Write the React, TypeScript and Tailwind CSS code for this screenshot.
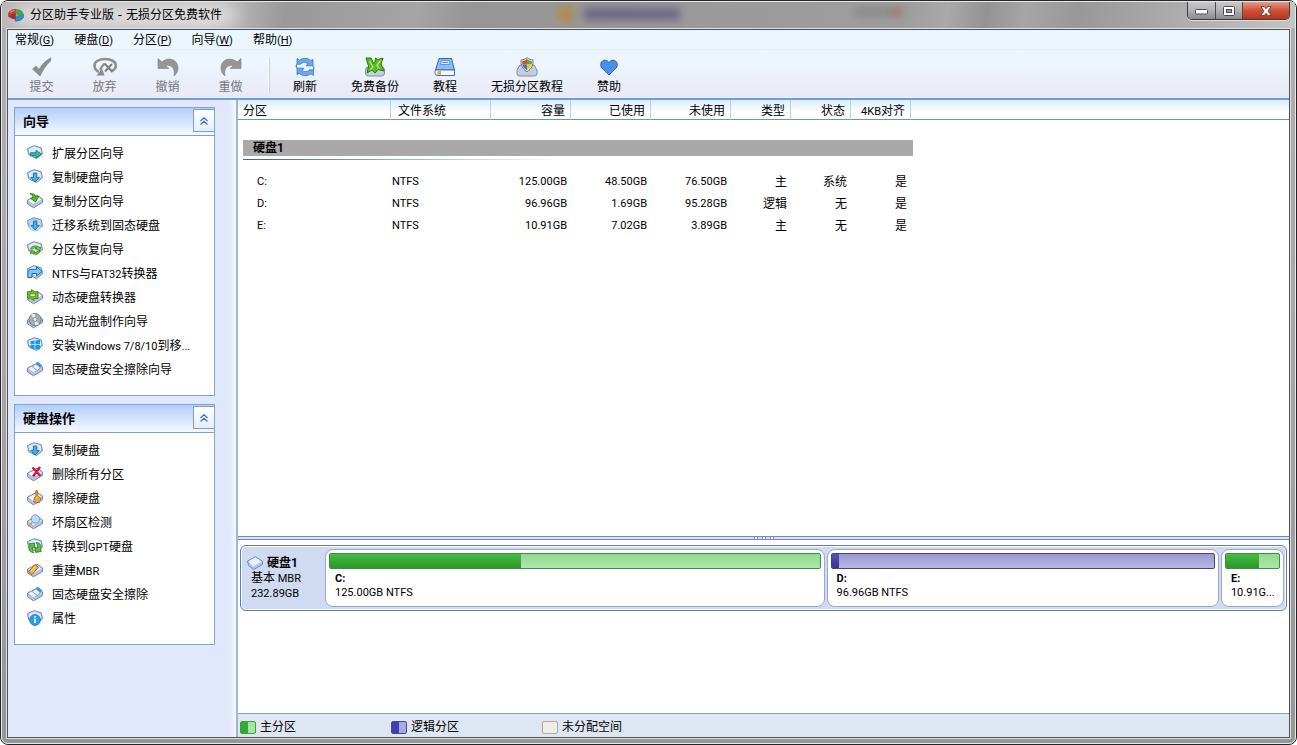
import { useState, type ReactNode } from "react";

type IconProps = { className?: string };

const FONT = "font-[Roboto,'Noto_Sans_CJK_SC',sans-serif]";

/* ---------- disk icons ---------- */

function DiskIcon({ children, flat = false }: { children?: ReactNode; flat?: boolean }) {
  return (
    <svg width="16" height="16" viewBox="0 0 16 16" className="shrink-0" aria-hidden="true">
      {flat ? (
        <>
          <path d="M0.5 7 L10 2.2 L15.5 6 V9.5 L6.5 14.8 L0.5 10.8Z" fill="#b3c3e6" stroke="#7089bd" />
          <path d="M1.5 7.2 L10 3 L14.6 6.4 L6.3 11.2Z" fill="#eef4fd" />
        </>
      ) : (
        <>
          <path d="M0.5 3.6 L7 0.7 L14.2 2.8 L15.5 8.8 L9.5 13.6 L1.6 9.6Z" fill="#b0c3e8" stroke="#7089bd" />
          <path d="M1.4 4 L7.2 1.5 L13.5 3.4 L14.4 7.8 L9 11.2 L2.4 7.8Z" fill="#dfebfb" />
        </>
      )}
      {children}
    </svg>
  );
}

const arrowDown = (
  <path d="M6.4 4 H9.8 V8.4 H12.3 L8.1 13 L3.9 8.4 H6.4Z" fill="#45b1e4" stroke="#1668a5" strokeWidth="0.9" />
);

const eraser = (
  <>
    <path d="M5.5 6 L10.5 1 L15 4.5 L10.5 9.5Z" fill="#f4f9ff" stroke="#5d86c4" strokeWidth="0.8" />
    <path d="M8.5 3 L10.5 1 L15 4.5 L13 6.8Z" fill="#3f95e6" />
  </>
);

const icons: Record<string, ReactNode> = {
  extend: (
    <DiskIcon>
      <path d="M3.5 7.8 H9 V5.4 L14.8 9.2 L9 13 V10.8 H3.5Z" fill="#35b9ae" stroke="#137b80" strokeWidth="0.9" />
    </DiskIcon>
  ),
  copyDisk: <DiskIcon>{arrowDown}</DiskIcon>,
  copyPart: (
    <DiskIcon flat>
      <path d="M3 0.8 C5.5 0.2 8 1 8.8 3.8 L12 3.2 L8.6 9 L3.6 5.4 L6.2 4.6 C5.8 2.6 4.8 1.6 3 0.8Z" fill="#5cba16" stroke="#2d7b08" strokeWidth="0.8" />
    </DiskIcon>
  ),
  migrate: (
    <DiskIcon>
      <circle cx="8" cy="8" r="6" fill="#c3dff8" stroke="#8fb2dd" strokeWidth="0.7" />
      {arrowDown}
    </DiskIcon>
  ),
  recover: (
    <DiskIcon>
      <path d="M3.5 7.5 C5 4.5 10 4.3 12 6.3 H14 L12.5 9.6 L8.2 7.8 L10 7.2 C8.5 6.4 6.5 6.8 5.8 8Z" fill="#79cc35" stroke="#2f8712" strokeWidth="0.8" />
      <path d="M13 10 C11.5 13.5 7 14 5 12 L3.3 12.6 L4 8.9 L8 10.6 L6.6 11.2 C8 12 10 11.5 10.5 10Z" fill="#79cc35" stroke="#2f8712" strokeWidth="0.8" />
    </DiskIcon>
  ),
  ntfs: (
    <DiskIcon>
      <path d="M0.8 12.5 V7.5 C0.8 5 2.5 4.4 4 4.4 H9.5 V1.8 L15.3 6.4 L9.5 11 V8.5 H5 V12.5Z" fill="#79c7f3" stroke="#1c67a8" />
    </DiskIcon>
  ),
  dynamic: (
    <DiskIcon flat>
      <path d="M0.6 2.6 H4.5 V0.6 L8 3 H11 V9.5 H7 V11.6 L3.4 9.2 H0.6Z" fill="#7bc41e" stroke="#397f08" strokeWidth="0.9" />
      <path d="M3 5 H8.4 V7.4 H3Z" fill="#eaf7d8" stroke="#397f08" strokeWidth="0.6" />
    </DiskIcon>
  ),
  bootCd: (
    <DiskIcon flat>
      <circle cx="8" cy="6.5" r="6" fill="#a9b0b5" stroke="#707880" />
      <path d="M8 6.5 L4 2 A6 6 0 0 1 8 0.8Z M8 6.5 L12 11 A6 6 0 0 1 8 12.2Z" fill="#e6eaec" />
      <circle cx="8" cy="6.5" r="2" fill="#eff2f4" stroke="#717980" strokeWidth="0.8" />
    </DiskIcon>
  ),
  windows: (
    <DiskIcon>
      <path d="M3.5 4.2 L7.6 3.6 V7.3 H3.5Z M8.4 3.5 L13 3 V7.3 H8.4Z M3.5 8.1 H7.6 V11.9 L3.5 11.2Z M8.4 8.1 H13 V12.6 L8.4 12Z" fill="#159be8" />
    </DiskIcon>
  ),
  erase: <DiskIcon flat>{eraser}</DiskIcon>,
  remove: (
    <DiskIcon flat>
      <path d="M5.5 1.5 L13.5 10 M13 1 L6 10.5" stroke="#d8153a" strokeWidth="2.4" />
    </DiskIcon>
  ),
  wipe: (
    <DiskIcon flat>
      <path d="M8.6 0.8 L10.4 0.5 L10.8 6 L13.6 8 L12.6 12.6 L6.8 12 L7.2 8 L9 6Z" fill="#efad3b" stroke="#9c6214" strokeWidth="0.8" />
    </DiskIcon>
  ),
  badSector: (
    <DiskIcon flat>
      <circle cx="8.5" cy="5" r="4.2" fill="#b9defa" stroke="#6b98d4" />
      <path d="M5.3 8.2 L1.2 12.5" stroke="#e0a040" strokeWidth="2" />
    </DiskIcon>
  ),
  gpt: (
    <DiskIcon>
      <path d="M6.8 14.8 C1.8 14 0.8 10 3 7.3 L1.8 5.8 L7.5 5 L7.6 10 L6 8.9 C4.8 10.5 5.3 12.8 6.8 14.8Z" fill="#62bd40" stroke="#267a1c" strokeWidth="0.8" />
      <path d="M9.2 4.5 C14.2 5 15.2 9.2 13.2 12 L14.3 13.5 L8.6 14.4 L8.4 9.2 L10.1 10.4 C11.2 8.6 10.6 6.5 9.2 4.5Z" fill="#62bd40" stroke="#267a1c" strokeWidth="0.8" />
    </DiskIcon>
  ),
  mbr: (
    <DiskIcon flat>
      <path d="M1.5 9.5 L8 2.6 L11.4 5.2 L5 12.6Z" fill="#f6b735" stroke="#a46c10" />
      <path d="M4 9.4 L8.2 4.8" stroke="#fff0b0" />
    </DiskIcon>
  ),
  info: (
    <DiskIcon>
      <circle cx="8" cy="10" r="5.4" fill="#27a0e8" stroke="#166dbb" strokeWidth="0.8" />
      <path d="M7.2 6.3 H8.9 V7.8 H7.2Z M7.2 8.7 H8.9 V13 H7.2Z" fill="#fff" />
    </DiskIcon>
  ),
};

/* ---------- toolbar icons ---------- */

const toolIcons: Record<string, ReactNode> = {
  commit: <path d="M2.5 12 L6 9 L9 12.5 C12 7.5 15 4 21 0.8 L20.5 4 C16 8 12.5 13.5 10 19Z" fill="#8e8e8e" stroke="#777" strokeWidth="0.6" />,
  discard: (
    <>
      <path d="M6 15 C2.5 13.5 1.5 11 1.5 8.5 C1.5 4.5 6 2 12 2 C18 2 22.8 4.5 22.8 8.5 C22.8 11 21.5 12.8 19 14" fill="none" stroke="#8f8f8f" strokeWidth="2.6" />
      <path d="M3.5 18.5 L11.5 18.5 L9 11.5 C7.5 13.5 6 15.5 3.5 18.5Z" fill="#8a8a8a" />
      <path d="M7 13 C8.5 10 10 8 11.5 6.5" fill="none" stroke="#8f8f8f" strokeWidth="2.2" />
      <path d="M11.5 6.5 L19.5 15 M19 7 L12 14.5" stroke="#7f7f7f" strokeWidth="2" />
    </>
  ),
  undo: <path d="M2 1.5 L6 5 C12 -0.5 22 2 22 11 C22 14.5 20.5 17 18 19 C19.5 11.5 15.5 7.5 9.5 8.5 L13 11.5 H2Z" fill="#969696" stroke="#808080" strokeWidth="0.6" />,
  redo: <path d="M22 1.5 L18 5 C12 -0.5 2 2 2 11 C2 14.5 3.5 17 6 19 C4.5 11.5 8.5 7.5 14.5 8.5 L11 11.5 H22Z" fill="#969696" stroke="#808080" strokeWidth="0.6" />,
  refresh: (
    <>
      <path d="M4 1.5 L6.5 3.2 C10 0.6 15 0.8 17.5 3.5 L20 2.6 V8.8 H13 L15 6.6 C12 4.6 9 5.4 7.5 7.2 H4Z" fill="#6aa9ee" stroke="#3973c4" strokeWidth="0.8" />
      <path d="M20.5 18.5 L18 16.8 C14 19.4 9 19.2 6.5 16.5 L4 17.4 V11.2 H11 L9 13.4 C12 15.4 15 14.6 16.5 12.8 H20.5Z" fill="#6aa9ee" stroke="#3973c4" strokeWidth="0.8" />
      <path d="M4 7.2 C3 8.4 3 10 4 11.2 M20 8.8 C21 10 21.2 11.4 20.5 12.8" fill="none" stroke="#4a86d6" strokeWidth="1.2" />
    </>
  ),
  backup: (
    <>
      <rect x="2.5" y="10" width="19" height="9" rx="3" fill="#c5cee1" stroke="#828eaa" />
      <path d="M3 1 H8 C9 2.5 10 4.5 10.5 7 L12 4.5 L12.5 1 L15 2.5 L20 1 L18 7 L21 14 L15 12.5 L12 16 L9 13 L4 16 L5.5 9Z" fill="#58bd24" stroke="#27770d" />
      <path d="M6.5 4 L10 10 L7 13 M18 3 L14 8 L16.5 12" fill="none" stroke="#b5e36d" strokeWidth="1.4" />
    </>
  ),
  book: (
    <>
      <path d="M6 1.5 H18.5 L21.5 13 H2.5Z" fill="#8fbdf3" stroke="#2f65bc" />
      <path d="M8.5 3.5 H16 L16.8 7.5 H7.6Z" fill="#e3f1ff" stroke="#4a80cc" strokeWidth="0.8" />
      <path d="M9.5 5.5 H15" stroke="#4a80cc" />
      <path d="M2.5 13 H21.5 V18.5 H4 C2 18.5 1.5 15 2.5 13Z" fill="#fff" stroke="#3b72c6" />
      <path d="M4.5 14 H8 V18.5 L6.2 17.5 L4.5 18.5Z" fill="#ed9e46" />
    </>
  ),
  shield: (
    <>
      <path d="M5 8 H19 L22 13 V16.5 Q22 19 19.5 19 H4.5 Q2 19 2 16.5 V13Z" fill="#c3cce0" stroke="#7f8ba6" />
      <path d="M12 0.7 C14 2.3 16 2.8 18 3 C18.3 8 16.5 12 12 14.7 C7.5 12 5.7 8 6 3 C8 2.8 10 2.3 12 0.7Z" fill="#f5f6f7" stroke="#68727c" />
      <path d="M12 2 V7.5 H7.2 V4Q9.8 4 12 2Z" fill="#dd4c24" />
      <path d="M12 2 V7.5 H16.8 V4Q14.2 4 12 2Z" fill="#59a84c" />
      <path d="M12 7.5 V13.2 Q8 11 7.2 7.5Z" fill="#357bc9" />
      <path d="M12 7.5 V13.2 Q16 11 16.8 7.5Z" fill="#f4c42d" />
    </>
  ),
  heart: <path d="M12 18 L5 11.2 C2.3 8.2 4 3.2 8 3.2 C10 3.2 11.3 4.4 12 5.6 C12.7 4.4 14 3.2 16 3.2 C20 3.2 21.7 8.2 19 11.2Z" fill="#4c8ee8" stroke="#2d63bd" />,
};

function ToolButton({ icon, label, disabled = false, className = "" }: { icon: string; label: string; disabled?: boolean; className?: string }) {
  return (
    <button
      type="button"
      disabled={disabled}
      className={`flex flex-col items-center gap-0.5 whitespace-nowrap leading-4 ${disabled ? "text-[#777]" : "text-black"} ${className}`}
    >
      <svg width="24" height="20" viewBox="0 0 24 20" aria-hidden="true">
        {toolIcons[icon]}
      </svg>
      {label}
    </button>
  );
}

function AppLogo({ className = "" }: IconProps) {
  return (
    <svg width="16" height="14" viewBox="0 0 16 14" className={className} aria-hidden="true">
      <path d="M0.5 5 Q3 1 8 1.5 V8.5 L0.8 9Z" fill="#c93f37" stroke="#912b2b" strokeWidth="0.6" />
      <path d="M8.3 1 Q14.5 1.3 15.5 6 L10 8 L7 4Z" fill="#47a83f" />
      <path d="M15.6 6.2 V9.5 Q13.5 13 7.5 13.2 L7 9 L10 8Z" fill="#2f8fc5" stroke="#1d6594" strokeWidth="0.5" />
      <path d="M0.8 7.8 L7 5.5 L8 11.5 Q2.5 11.5 0.8 7.8Z" fill="#a52f30" />
      <path d="M2 4.5 Q4 2.5 6.5 2.7" stroke="#f09a8c" fill="none" />
    </svg>
  );
}

/* ---------- data ---------- */

const menus = [
  ["常规", "G"],
  ["硬盘", "D"],
  ["分区", "P"],
  ["向导", "W"],
  ["帮助", "H"],
];

const wizardItems = [
  { icon: "extend", label: "扩展分区向导" },
  { icon: "copyDisk", label: "复制硬盘向导" },
  { icon: "copyPart", label: "复制分区向导" },
  { icon: "migrate", label: "迁移系统到固态硬盘" },
  { icon: "recover", label: "分区恢复向导" },
  { icon: "ntfs", label: "NTFS与FAT32转换器" },
  { icon: "dynamic", label: "动态硬盘转换器" },
  { icon: "bootCd", label: "启动光盘制作向导" },
  { icon: "windows", label: "安装Windows 7/8/10到移..." },
  { icon: "erase", label: "固态硬盘安全擦除向导" },
];

const diskItems = [
  { icon: "copyDisk", label: "复制硬盘" },
  { icon: "remove", label: "删除所有分区" },
  { icon: "wipe", label: "擦除硬盘" },
  { icon: "badSector", label: "坏扇区检测" },
  { icon: "gpt", label: "转换到GPT硬盘" },
  { icon: "mbr", label: "重建MBR" },
  { icon: "erase", label: "固态硬盘安全擦除" },
  { icon: "info", label: "属性" },
];

const columns = ["分区", "文件系统", "容量", "已使用", "未使用", "类型", "状态", "4KB对齐"];

const rows = [
  ["C:", "NTFS", "125.00GB", "48.50GB", "76.50GB", "主", "系统", "是"],
  ["D:", "NTFS", "96.96GB", "1.69GB", "95.28GB", "逻辑", "无", "是"],
  ["E:", "NTFS", "10.91GB", "7.02GB", "3.89GB", "主", "无", "是"],
];

const partitions = [
  { name: "C:", info: "125.00GB NTFS", weight: 491, used: 39, logical: false },
  { name: "D:", info: "96.96GB NTFS", weight: 384, used: 2, logical: true },
  { name: "E:", info: "10.91G...", weight: 55, used: 63, logical: false },
];

/* ---------- parts ---------- */

// Latin runs are set one step smaller than the Chinese around them
function MixedText({ text }: { text: string }) {
  return (
    <>
      {text.split(/([ -~]+)/).map((part, i) =>
        i % 2 === 1 ? (
          <span key={i} className="text-[11px]">
            {part}
          </span>
        ) : (
          part
        )
      )}
    </>
  );
}

function TitleBar() {
  return (
    <header className="relative flex h-[26px] shrink-0 items-center overflow-hidden bg-[linear-gradient(100deg,#bab7b7_0%,#c4c4c4_16%,#999_22%,#a5a5a5_32%,#969696_36%,#9e9e9e_70%,#a9a9a9_73%,#939393_76%,#a6a6a6_79%,#989898_83%,#adadad_91%,#c4c4c4_100%)]">
      <div className="absolute left-[43%] top-1 size-4 bg-[#b98634] opacity-70 blur-xs" />
      <div className="absolute left-[45%] top-1.5 h-3 w-24 bg-[#4c4578] opacity-60 blur-xs" />
      <div className="absolute left-[66%] top-1.5 h-2 w-10 bg-[#6a6161] opacity-40 blur-xs" />
      <div className="absolute left-[69%] top-1.5 size-2 bg-[#b34747] opacity-60 blur-xs" />
      <div className="absolute left-3 top-1 h-5 w-56 rounded-full bg-white/50 blur-sm" />
      <div className="relative flex items-center gap-1.5 pl-1.5">
        <AppLogo />
        <h1 className="font-['DejaVu_Sans','Noto_Sans_CJK_SC',sans-serif] text-xs leading-4 text-black">分区助手专业版 - 无损分区免费软件</h1>
      </div>
      <div className="mr-[5px] ml-auto flex h-[18px] self-start overflow-hidden rounded-b-[5px] border border-t-0 border-[#3c3c3c] shadow-[0_1px_0_#ddd]">
        <button type="button" aria-label="最小化" className="flex w-7 items-center justify-center border-r border-[#4b4b4b] bg-linear-to-b from-[#c9c9c9] via-[#b4b4b4] via-45% to-[#8b8b8b]">
          <svg width="13" height="6" viewBox="0 0 13 6" className="mt-0.5"><rect x="0.5" y="0.5" width="12" height="4.5" rx="1" fill="#fff" stroke="#4a4a5c" /></svg>
        </button>
        <button type="button" aria-label="最大化" className="flex w-[27px] items-center justify-center border-r border-[#4b4b4b] bg-linear-to-b from-[#c9c9c9] via-[#b4b4b4] via-45% to-[#8b8b8b]">
          <svg width="12" height="10" viewBox="0 0 12 10"><rect x="0.5" y="0.5" width="11" height="9" rx="1" fill="#fff" stroke="#4a4a5c" /><rect x="3.5" y="3.5" width="5" height="3" fill="#999" stroke="#4a4a5c" /></svg>
        </button>
        <button type="button" aria-label="关闭" className="flex w-[46px] items-center justify-center bg-linear-to-b from-[#e39a8a] via-[#cf5038] via-50% to-[#b9341c]">
          <svg width="12" height="10" viewBox="0 0 12 10"><path d="M0.8 0.5 H4.1 L6 2.8 L7.9 0.5 H11.2 L7.9 5 L11.2 9.5 H7.9 L6 7.2 L4.1 9.5 H0.8 L4.1 5Z" fill="#fff" stroke="#5c3a3a" strokeWidth="0.8" /></svg>
        </button>
      </div>
    </header>
  );
}

function SidePanel({ title, items }: { title: string; items: { icon: string; label: string }[] }) {
  const [open, setOpen] = useState(true);

  return (
    <section className="border border-[#87a1cf] bg-white">
      <div className="flex h-7 items-start border-b border-[#7f9fd3] bg-linear-to-b from-[#b3cefc] to-[#f5f9ff]">
        <h2 className="flex h-full flex-1 items-center pt-px pl-2 text-[13px] font-bold">{title}</h2>
        <button
          type="button"
          aria-label={title}
          aria-expanded={open}
          onClick={() => setOpen(!open)}
          className="mt-px flex h-[23px] w-[21px] items-center justify-center border border-r-0 border-[#7f9fd3] bg-linear-to-b from-white to-[#e4effd]"
        >
          <svg width="8" height="8" viewBox="0 0 8 8"><path d="M0.5 4 L4 0.8 L7.5 4 M0.5 7.5 L4 4.3 L7.5 7.5" fill="none" stroke="#3c6da8" strokeWidth="1.2" /></svg>
        </button>
      </div>
      {open && (
        <ul className="pt-[5px] pb-3.5">
          {items.map((item) => (
            <li key={item.label}>
              <button type="button" className="flex h-6 w-full items-center gap-[9px] pl-3 text-left whitespace-nowrap">
                {icons[item.icon]}
                <span className="pt-0.5">
                  <MixedText text={item.label} />
                </span>
              </button>
            </li>
          ))}
        </ul>
      )}
    </section>
  );
}

function PartitionTable() {
  return (
    <table className="w-full table-fixed border-separate border-spacing-0">
      <colgroup>
        <col className="w-[153px]" />
        <col className="w-[100px]" />
        <col className="w-20" />
        <col className="w-20" />
        <col className="w-20" />
        <col className="w-[60px]" />
        <col className="w-[60px]" />
        <col className="w-[60px]" />
        <col />
      </colgroup>
      <thead>
        <tr className="bg-linear-to-b from-[#dcebfb] via-white via-60% to-white">
          {columns.map((c, i) => (
            <th key={c} className={`h-5 border-r border-b border-r-[#b8d3f1] border-b-[#6a93bf] p-0 pt-1 leading-[15px] font-normal whitespace-nowrap ${i === 0 ? "pl-[5px] text-left" : i === 1 ? "pl-[7px] text-left" : "pr-[5px] text-right"}`}>
              <MixedText text={c} />
            </th>
          ))}
          <td className="border-b border-[#6a93bf]" />
        </tr>
      </thead>
      <tbody>
        <tr>
          <th colSpan={9} className="p-0 pt-5 pb-2.5 pl-[5px] text-left">
            <div className="h-4 w-[670px] max-w-full bg-[#a9a9a9] pl-2.5 text-xs leading-4 font-bold">硬盘1</div>
            <div className="mt-[3px] h-px w-[320px] bg-linear-to-r from-[#3c648c] to-transparent" />
          </th>
        </tr>
        {rows.map((row) => (
          <tr key={row[0]}>
            {row.map((cell, i) => (
              <td
                key={i}
                className={`h-[22px] p-0 ${i < 5 ? "pt-0.5 text-[11px]" : "pt-px text-xs"} ${i === 0 ? "pl-[19px]" : i === 1 ? "pl-px" : "pr-1 text-right"}`}
              >
                {cell}
              </td>
            ))}
            <td />
          </tr>
        ))}
      </tbody>
    </table>
  );
}

function DiskMap() {
  return (
    <div className="mx-0.5 mt-[5px] flex rounded-md border border-[#5f7db3] bg-[#d0daf0] p-0.5 shadow-[inset_0_0_0_1px_#fff]">
      <div className="w-[82px] shrink-0 pt-[7px] pl-1 text-[11px] leading-[15px]">
        <div className="flex items-center gap-1 text-xs leading-4 font-bold">
          <svg width="16" height="15" viewBox="0 0 16 15" className="shrink-0" aria-hidden="true">
            <path d="M0.5 5 L8.5 0.7 L15.5 5.2 V8.5 L6.5 13.6 L1.6 9.5Z" fill="#b3c6ea" stroke="#6b88c0" />
            <path d="M1.4 5.2 L8.4 1.6 L14.6 5.5 L6.2 10.4Z" fill="#eaf1fc" />
          </svg>
          硬盘1
        </div>
        <p className="pl-1"><span className="text-xs leading-[15px]">基本</span> MBR</p>
        <p className="pl-1">232.89GB</p>
      </div>
      <div className="flex min-w-0 flex-1 gap-0.5 py-px">
        {partitions.map((p) => (
          <button
            key={p.name}
            type="button"
            className="flex h-[58px] min-w-0 basis-0 flex-col items-stretch rounded-lg border border-[#9ea8cf] bg-white px-[3px] pt-[3px] text-left text-[11px] leading-3.5"
            style={{ flexGrow: p.weight }}
          >
            <span className={`flex h-4 shrink-0 overflow-hidden rounded-xs border ${p.logical ? "border-[#444281] bg-linear-to-b from-[#9998d1] to-[#b9b8e5]" : "border-[#3a9137] bg-linear-to-b from-[#91d991] to-[#aee8ad]"}`}>
              <span
                className={p.logical ? "bg-linear-to-b from-[#5654b0] to-[#37358d]" : "bg-linear-to-b from-[#44bd40] to-[#2d952b]"}
                style={{ width: `${p.used}%` }}
              />
            </span>
            <span className="mt-[3px] pl-1.5 font-bold">{p.name}</span>
            <span className="overflow-hidden pl-1.5 whitespace-nowrap">{p.info}</span>
          </button>
        ))}
      </div>
    </div>
  );
}

function Legend() {
  return (
    <footer className="flex h-6 shrink-0 items-center border-t border-[#7fa9bf] bg-[#dee6f1] pt-[3px] pl-0.5">
      <div className="flex w-[151px] items-center gap-1">
        <span className="h-[13px] w-4 rounded-xs border border-[#3da23a] bg-linear-to-r from-[#35a832] from-50% to-[#a5e5a3] to-50%" />
        主分区
      </div>
      <div className="flex w-[151px] items-center gap-1">
        <span className="h-[13px] w-4 rounded-xs border border-[#4543a4] bg-linear-to-r from-[#403eb0] from-50% to-[#aaa8e5] to-50%" />
        逻辑分区
      </div>
      <div className="flex items-center gap-1">
        <span className="h-[13px] w-4 rounded-xs border border-[#b9a890] bg-[#efedea]" />
        未分配空间
      </div>
    </footer>
  );
}

export default function App() {
  return (
    <div className={`flex min-h-screen flex-col rounded-lg border border-[#26262a] bg-[#a5a5a5] text-xs text-black ${FONT}`}>
      <div className="flex flex-1 flex-col rounded-[7px] border border-[#e8e8e8] bg-linear-to-b from-[#aeb0b0] via-[#a9a5a5] to-[#959696]">
        <TitleBar />
        <div className="mx-1 mb-1 flex flex-1 flex-col border border-[#dedede]">
          <div className="flex flex-1 flex-col border border-[#4d5257] bg-white">
            <div className="border-b-2 border-[#6ba1d9] bg-linear-to-b from-[#ebf6fc] via-[#edf5fd] to-[#e9e9f6]">
              <nav className="flex h-5 items-center gap-5 border-b border-[#e5eef2] pt-0.5 pl-[7px]">
                {menus.map(([label, key]) => (
                  <button key={key} type="button" className="whitespace-nowrap leading-4">
                    {label}
                    <span className="text-[11px]">
                      (<u>{key}</u>)
                    </span>
                  </button>
                ))}
              </nav>
              <div className="flex h-12 items-start pt-[7px] pl-0.5">
                <ToolButton icon="commit" label="提交" disabled className="w-[63px]" />
                <ToolButton icon="discard" label="放弃" disabled className="w-[63px]" />
                <ToolButton icon="undo" label="撤销" disabled className="w-[63px]" />
                <ToolButton icon="redo" label="重做" disabled className="w-[63px]" />
                <div className="ml-1.5 h-9 w-0.5 border-l border-white bg-[#c3cbdc]" />
                <div className="ml-[23px] flex gap-[34px]">
                  <ToolButton icon="refresh" label="刷新" />
                  <ToolButton icon="backup" label="免费备份" />
                  <ToolButton icon="book" label="教程" />
                  <ToolButton icon="shield" label="无损分区教程" />
                  <ToolButton icon="heart" label="赞助" />
                </div>
              </div>
            </div>
            <div className="flex flex-1">
              <aside className="flex w-[230px] shrink-0 flex-col gap-2 border-r-2 border-[#a3b4d8] bg-linear-to-r from-[#e2e8fc] from-97% to-[#f2f6ff] pt-[7px] pr-[21px] pl-1.5">
                <SidePanel title="向导" items={wizardItems} />
                <SidePanel title="硬盘操作" items={diskItems} />
              </aside>
              <main className="flex min-w-0 flex-1 flex-col">
                <div className="flex-1">
                  <PartitionTable />
                </div>
                <div className="h-[177px] shrink-0">
                  <div className="flex h-1 items-center justify-center gap-1 border-y border-[#7189bd] bg-[#d7e3f8]">
                    <span className="size-1 border border-[#7189bd] bg-white" />
                    <span className="size-1 border border-[#7189bd] bg-white" />
                    <span className="size-1 border border-[#7189bd] bg-white" />
                  </div>
                  <DiskMap />
                </div>
                <Legend />
              </main>
            </div>
          </div>
        </div>
      </div>
    </div>
  );
}
